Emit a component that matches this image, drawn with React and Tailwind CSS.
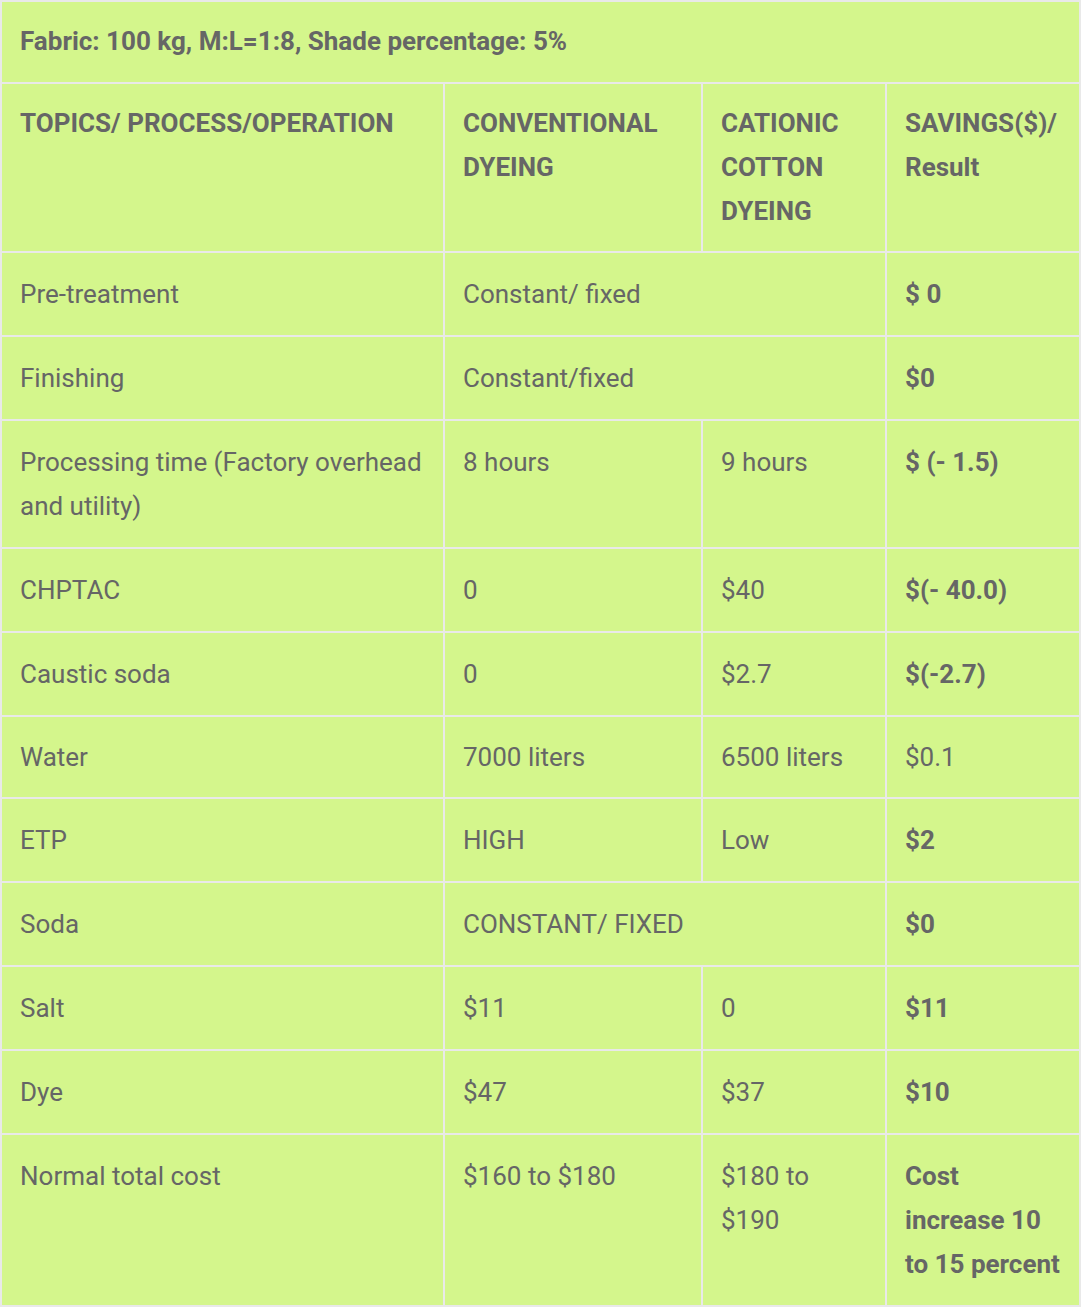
import React from "react";

const rows = [
  { topic: "Pre-treatment", span: "Constant/ fixed", result: "$ 0", bold: true },
  { topic: "Finishing", span: "Constant/fixed", result: "$0", bold: true },
  { topic: "Processing time (Factory overhead and utility)", conv: "8 hours", cat: "9 hours", result: "$ (- 1.5)", bold: true },
  { topic: "CHPTAC", conv: "0", cat: "$40", result: "$(- 40.0)", bold: true },
  { topic: "Caustic soda", conv: "0", cat: "$2.7", result: "$(-2.7)", bold: true },
  { topic: "Water", conv: "7000 liters", cat: "6500 liters", result: "$0.1", bold: false, tight: true },
  { topic: "ETP", conv: "HIGH", cat: "Low", result: "$2", bold: true },
  { topic: "Soda", span: "CONSTANT/ FIXED", result: "$0", bold: true },
  { topic: "Salt", conv: "$11", cat: "0", result: "$11", bold: true },
  { topic: "Dye", conv: "$47", cat: "$37", result: "$10", bold: true },
  { topic: "Normal total cost", conv: "$160 to $180", cat: "$180 to $190", result: "Cost increase 10 to 15 percent", bold: true },
];

const base = "border-2 border-[#e9e9e9] px-[18px] align-top text-left";
const head = `${base} pt-[17px] pb-[18px]`;

export default function App() {
  return (
    <div className="bg-white min-h-screen font-['Roboto',sans-serif] text-[26px] leading-[44px] text-[#666666]">
      <table className="w-[1079px] table-fixed border-collapse bg-[#d4f68c]">
        <colgroup>
          <col className="w-[443px]" />
          <col className="w-[258px]" />
          <col className="w-[184px]" />
          <col className="w-[194px]" />
        </colgroup>
        <tbody>
          <tr>
            <td colSpan={4} className={`${base} pt-[17px] pb-[19px] font-bold`}>
              Fabric: 100 kg, M:L=1:8, Shade percentage: 5%
            </td>
          </tr>
          <tr className="font-bold">
            <td className={head}>TOPICS/ PROCESS/OPERATION</td>
            <td className={head}>CONVENTIONAL DYEING</td>
            <td className={head}>CATIONIC COTTON DYEING</td>
            <td className={head}>SAVINGS($)/ Result</td>
          </tr>
          {rows.map((r) => {
            const cell = `${base} ${r.tight ? "pt-[18px] pb-[18px]" : "py-[19px]"}`;
            return (
              <tr key={r.topic}>
                <td className={cell}>{r.topic}</td>
                {r.span ? (
                  <td colSpan={2} className={cell}>{r.span}</td>
                ) : (
                  <>
                    <td className={cell}>{r.conv}</td>
                    <td className={cell}>{r.cat}</td>
                  </>
                )}
                <td className={`${cell} ${r.bold ? "font-bold" : ""}`}>{r.result}</td>
              </tr>
            );
          })}
        </tbody>
      </table>
    </div>
  );
}
